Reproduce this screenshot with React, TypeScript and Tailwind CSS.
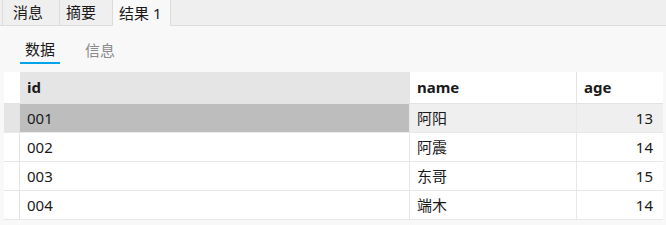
import React from "react";

const rows = [
  { id: "001", name: "阿阳", age: 13 },
  { id: "002", name: "阿震", age: 14 },
  { id: "003", name: "东哥", age: 15 },
  { id: "004", name: "端木", age: 14 },
];

const font = { fontFamily: '"Noto Sans", "Noto Sans CJK SC", sans-serif' };

export default function App() {
  return (
    <div className="w-[666px] h-[225px] overflow-hidden bg-[#f8f8f8] text-[#1a1a1a]" style={font}>
      {/* Top tabs */}
      <div className="flex h-[26px] bg-[#efefef] border-b border-[#dcdcdc] pl-[2px]">
        <div className="w-[58px] h-full border-x border-[#dcdcdc] flex items-center pl-[10px] text-[15px]">消息</div>
        <div className="w-[53px] h-full border-r border-[#dcdcdc] flex items-center pl-[6px] text-[15px]">摘要</div>
        <div className="w-[58px] h-[26px] bg-[#f8f8f8] border-r border-[#dcdcdc] flex items-center pl-[6px] text-[15px]">结果 1</div>
      </div>

      {/* Sub tabs */}
      <div className="flex gap-[20px] pl-[20px] pt-[10px] h-[46px]">
        <div className="w-[40px] h-[28px] flex items-center justify-center border-b-2 border-[#00a2e8] text-[15px] text-[#1a1a1a]">数据</div>
        <div className="w-[40px] h-[28px] flex items-center justify-center text-[15px] text-[#8a8a8a]">信息</div>
      </div>

      {/* Grid */}
      <div className="ml-[4px] w-[659px] bg-white">
        <div className="grid grid-cols-[16px_389px_167px_87px] h-[32px] border-b border-[#e3e3e3] text-[15px] font-bold">
          <div className="bg-white" />
          <div className="bg-[#e5e5e5] flex items-center pl-[7px]">id</div>
          <div className="flex items-center pl-[7px] border-l border-[#e3e3e3]">name</div>
          <div className="flex items-center pl-[7px] border-l border-[#e3e3e3]">age</div>
        </div>
        {rows.map((r, i) => {
          const sel = i === 0;
          return (
            <div
              key={r.id}
              className={`grid grid-cols-[16px_389px_167px_87px] h-[29px] border-b border-[#e8e8e8] text-[15px] ${sel ? "bg-[#efefef]" : "bg-white"}`}
            >
              <div className={`border-r border-[#e3e3e3] ${sel ? "bg-[#e5e5e5]" : ""}`} />
              <div className={`flex items-center pl-[7px] ${sel ? "bg-[#bdbdbd]" : ""}`}>{r.id}</div>
              <div className="flex items-center pl-[7px] border-l border-[#e8e8e8]">{r.name}</div>
              <div className="flex items-center justify-end pr-[10px] border-l border-[#e8e8e8]">{r.age}</div>
            </div>
          );
        })}
      </div>
    </div>
  );
}
